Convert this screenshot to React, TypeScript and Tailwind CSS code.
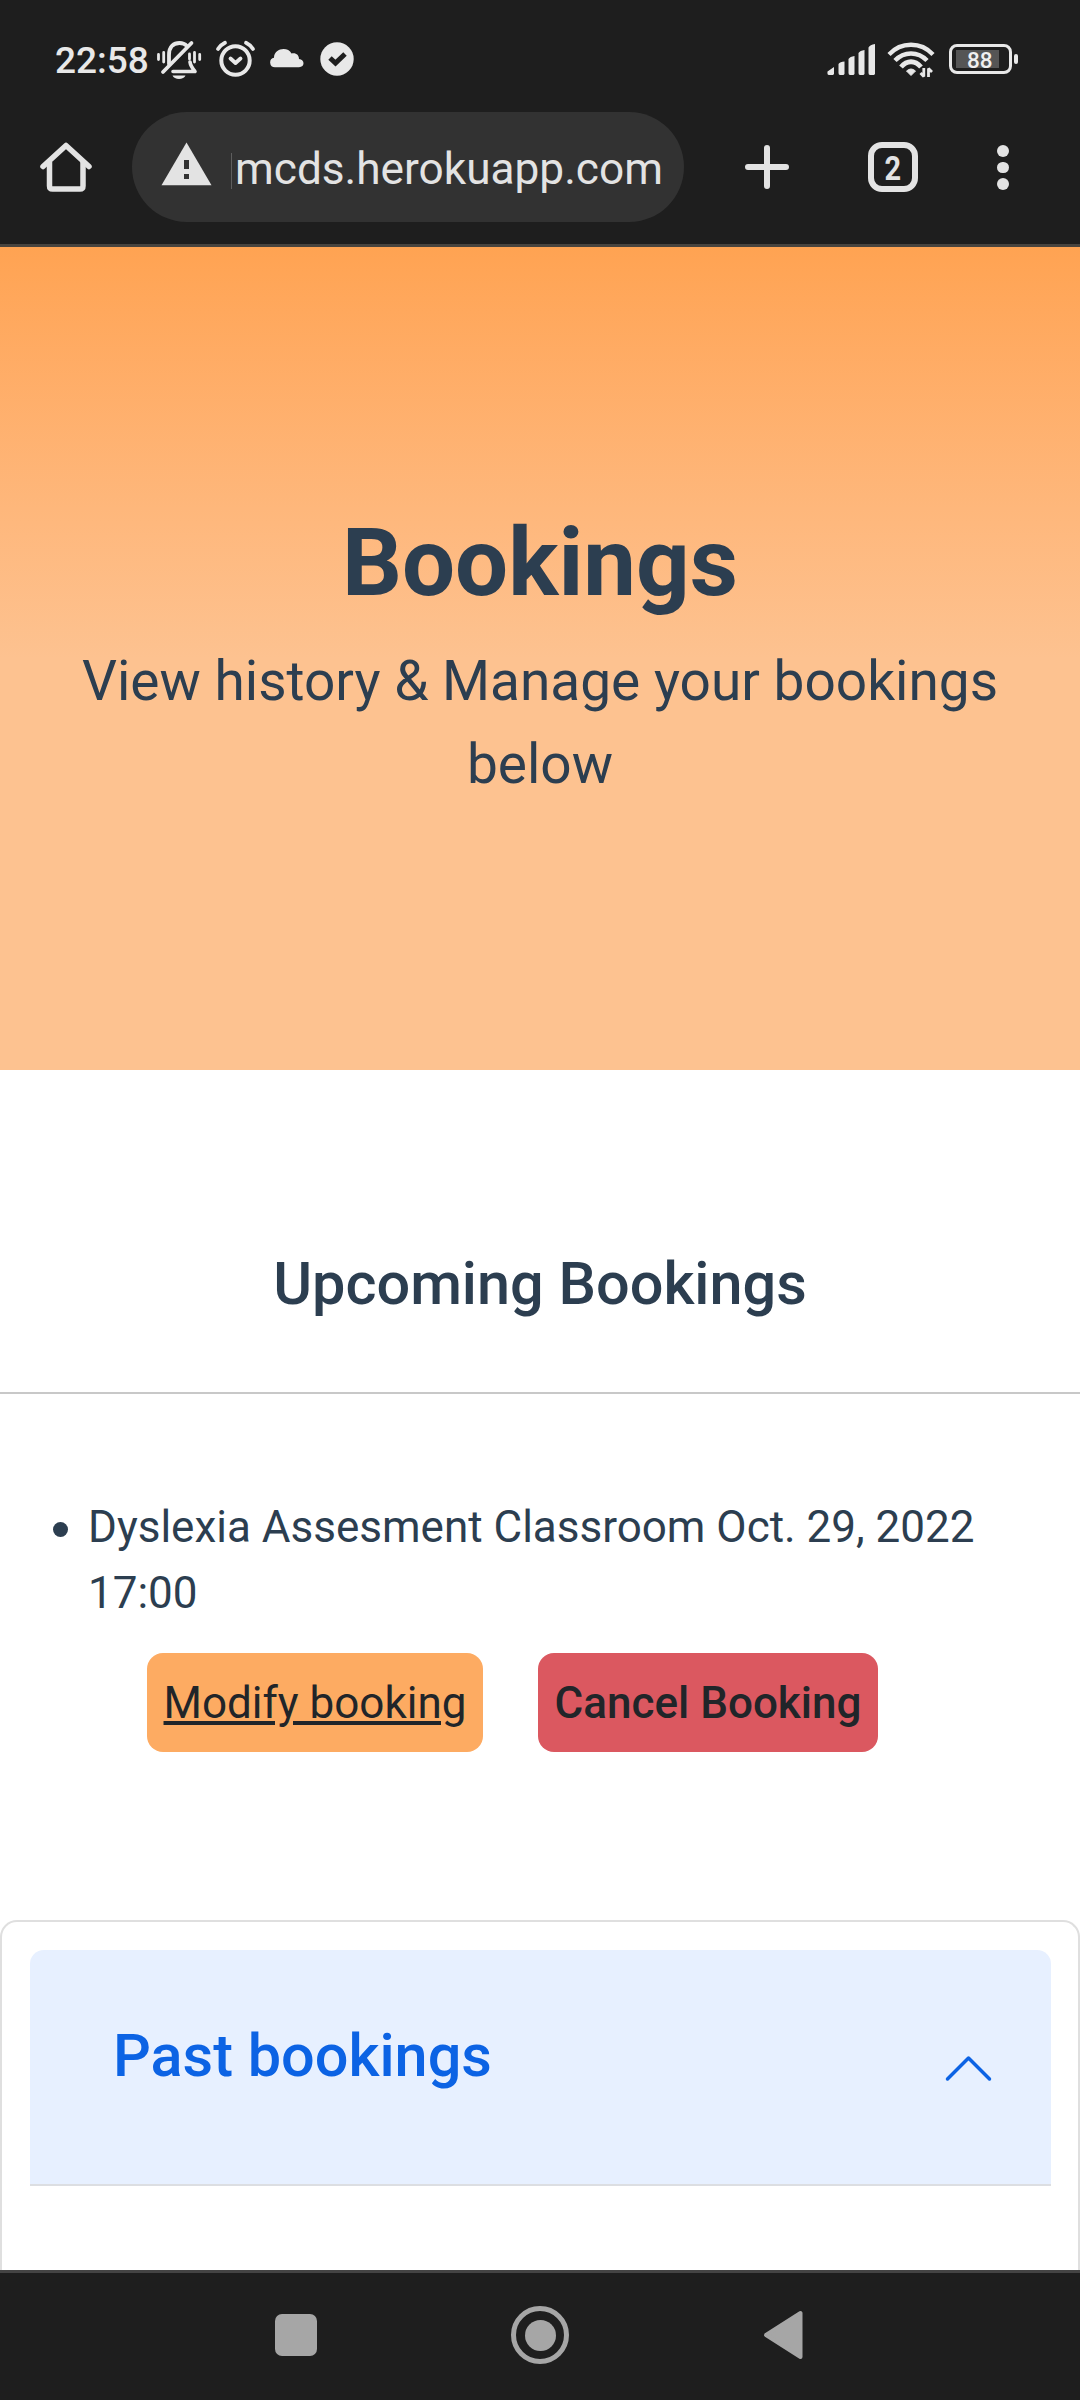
import React from 'react';

function StatusBar() {
  return (
    <div className="flex h-[106px] items-start text-[#e8e8e8]">
      <span className="ml-[55px] mt-[40px] w-[97px] whitespace-nowrap text-[37px] font-medium leading-[42px]">22:58</span>
      <svg className="mt-[36px] ml-[3px]" width="50" height="46" viewBox="155 36 50 46" fill="none" stroke="currentColor" strokeLinecap="round">
        <path d="M158.500 54.500v5M163.700 52.500v9.500M194.500 52.500v9.500M199.700 54.500v5M189.500 54v5" strokeWidth="2.8" />
        <path d="M169 64V55C169 46 174 43 179.500 43 183 43 185.500 44.500 187 46" strokeWidth="3.8" />
        <path d="M190 62C190.500 66 193 69 195 71.500H173" strokeWidth="3.600" strokeLinejoin="round" />
        <path d="M163 72L191.500 43" strokeWidth="3.8" />
        <path d="M172.500 75.500H185.500C184 80 174 80 172.500 75.500Z" fill="currentColor" stroke="none" />
      </svg>
      <svg className="mt-[36px] ml-[7px]" width="46" height="46" viewBox="212 36 46 46" fill="none" stroke="currentColor" strokeLinecap="round" strokeLinejoin="round">
        <circle cx="235.500" cy="60.500" r="14.200" strokeWidth="4" />
        <path d="M218 49Q220.500 45 225 42.800M253 49Q250.500 45 246 42.800" strokeWidth="3.800" />
        <path d="M230.500 58.500L235.500 63L240.500 58.500" strokeWidth="3.800" />
      </svg>
      <svg className="mt-[47px] ml-[11px]" width="36" height="22" viewBox="269 47 36 22" fill="currentColor">
        <path d="M275 67.300A4.800 4.800 0 0 1 274 57.800C274 48 288 46 291.500 53.500C296 52.500 299 55 299 59C305 59.500 305 67.300 299 67.300Z" />
      </svg>
      <svg className="mt-[41px] ml-[14px]" width="36" height="36" viewBox="319 41 36 36">
        <circle cx="337" cy="59" r="16.700" fill="currentColor" />
        <path d="M330 58L335.500 63L345 54" fill="none" stroke="#1e1e1e" strokeWidth="5" />
      </svg>
      <svg className="mt-[40px] ml-[471px]" width="52" height="38" viewBox="826 40 52 38" fill="currentColor">
        <path d="M827.500 71.500L834 67V74L833 75H829Q827 75 827.500 71.500ZM838.500 64Q840 61.500 844.500 61.500V74L843.500 75H840Q838.500 75 838.500 73ZM848.500 59Q850 56.500 854.500 56V74L853.500 75H850Q848.500 75 848.500 73ZM858.500 53Q860 50.500 864.500 50V74L863.500 75H860Q858.500 75 858.500 73ZM868.500 47.500Q870 44.500 875 44V74L874 75H870Q868.500 75 868.500 73Z" />
      </svg>
      <svg className="mt-[40px] ml-[8px]" width="52" height="40" viewBox="886 40 52 40" fill="none" stroke="currentColor">
        <path d="M889 54.500C901 41.500 921 41.500 933 54.500" strokeWidth="4.300" />
        <path d="M895 60.500C904 51 918 51 927 60.500" strokeWidth="4.500" />
        <path d="M901 67C907 60 915 60 921 67" strokeWidth="4.800" />
        <path d="M906.500 71Q911 67 915.500 71L911 75.500Z" fill="currentColor" strokeWidth="1" strokeLinejoin="round" />
        <path d="M923.800 68V76.500L920.500 73M928.500 77V68.500L932 72" strokeWidth="2.800" strokeLinejoin="bevel" />
      </svg>
      <div className="relative ml-[11px] mt-[44px] flex h-[30px] w-[63px] items-center rounded-[8px] border-[3px] border-[#e8e8e8] pl-[4px]">
        <div className="h-[18px] w-[43px] bg-[#555555]" />
        <span className="absolute left-[15px] top-[2px] text-[22.500px] font-medium leading-[22px] text-[#efefef]">88</span>
        <div className="absolute -right-[9px] top-[7px] h-[10px] w-[4px] rounded-[2px] bg-[#e8e8e8]" />
      </div>
    </div>
  );
}

function BrowserBar() {
  return (
    <div className="flex h-[138px] items-start text-[#e3e3e3]">
      <svg className="ml-[38px] mt-[34px]" width="56" height="54" viewBox="38 140 56 54" fill="none" stroke="currentColor" strokeWidth="5.500">
        <path d="M43 166.500L66 145.500L89 166.500" strokeLinecap="round" strokeLinejoin="round" />
        <path d="M49.500 162V186Q49.500 189 52.500 189H80Q83 189 83 186V162" />
      </svg>
      <div className="ml-[38px] mt-[6px] flex h-[110px] w-[552px] items-start rounded-full bg-[#323232]">
        <svg className="ml-[29px] mt-[30px]" width="51" height="44" viewBox="0 0 51 44">
          <path d="M25.500 0.500L50.500 43.300H0.500Z" fill="currentColor" />
          <path d="M23 18h5v9h-5zM23 32h5v5h-5z" fill="#323232" />
        </svg>
        <div className="ml-[19px] mt-[41px] h-[36px] w-px bg-[#5e5e5e]" />
        <span className="ml-[3px] mt-[29px] whitespace-nowrap text-[44.200px] leading-[56px]">mcds.herokuapp.com</span>
      </div>
      <svg className="ml-[60px] mt-[38px]" width="46" height="46" viewBox="0 0 46 46" fill="none" stroke="currentColor" strokeWidth="6" strokeLinecap="round">
        <path d="M23 4V42M4 23H42" />
      </svg>
      <div className="ml-[78px] mt-[36px] flex h-[50px] w-[50px] items-center justify-center rounded-[14px] border-[6px] border-[#e3e3e3] pt-[2px] text-[34px] font-bold leading-[36px]">
        <span className="scale-x-[0.85]">2</span>
      </div>
      <div className="ml-[79px] mt-[39px] flex flex-col gap-[5px]">
        <i className="size-[11.500px] rounded-full bg-[#e3e3e3]" />
        <i className="size-[11.500px] rounded-full bg-[#e3e3e3]" />
        <i className="size-[11.500px] rounded-full bg-[#e3e3e3]" />
      </div>
    </div>
  );
}

function Hero() {
  return (
    <section className="flex h-[823px] flex-col items-center bg-linear-to-b from-[#ffa352] via-[#fdc290] via-50% to-[#fdc290] pt-[259px] text-center">
      <h1 className="text-[94px] font-bold leading-[114px]">Bookings</h1>
      <p className="mt-[20px] w-[950px] text-[55px] leading-[82.500px]">View history &amp; Manage your bookings below</p>
    </section>
  );
}

function Upcoming() {
  return (
    <section className="h-[850px]">
      <h2 className="pt-[179px] text-center text-[59.400px] font-medium leading-[70px]">Upcoming Bookings</h2>
      <hr className="mt-[73px] border-0 border-t-2 border-[#c8c8c8]" />
      <div className="flex pt-[100px] pl-[53px]">
        <i className="mt-[28px] mr-[20px] size-[15px] shrink-0 rounded-full bg-[#2c3e50]" />
        <p className="w-[920px] text-[44px] leading-[66px]">Dyslexia Assesment Classroom Oct. 29, 2022 17:00</p>
      </div>
      <div className="mt-[27px] ml-[147px] flex gap-[55px] text-[44px] leading-[66px] text-[#212529]">
        <a className="flex h-[99px] w-[336px] items-center justify-center rounded-[16px] bg-[#fdab62] underline">Modify booking</a>
        <button className="flex h-[99px] w-[340px] items-center justify-center rounded-[16px] bg-[#db5860] font-medium">Cancel Booking</button>
      </div>
    </section>
  );
}

function PastBookings() {
  return (
    <section className="h-[350px] rounded-t-[17px] border-2 border-b-0 border-[#dfdfdf] pt-[28px] pr-[27px] pl-[28px]">
      <div className="flex h-[236px] justify-between rounded-t-[14px] border-b-2 border-[#dcdee2] bg-[#e7f0ff] pt-[71px] pl-[83px] pr-[58px] text-[#0c63e4]">
        <h2 className="text-[59.400px] font-medium leading-[71px]">Past bookings</h2>
        <svg className="mt-[33px]" width="50" height="30" viewBox="0 0 50 30" fill="none" stroke="currentColor" strokeWidth="3.500" strokeLinecap="round" strokeLinejoin="round">
          <path d="M4.500 25L25.500 4L46.500 25" />
        </svg>
      </div>
    </section>
  );
}

export default function App() {
  return (
    <div className="flex h-[2400px] w-[1080px] flex-col overflow-hidden bg-white font-['Roboto',sans-serif] text-[#2c3e50]">
      <header className="h-[247px] shrink-0 border-b-[3px] border-[#48443f] bg-[#1e1e1e]">
        <StatusBar />
        <BrowserBar />
      </header>
      <main className="h-[2023px] shrink-0 overflow-hidden">
        <Hero />
        <Upcoming />
        <PastBookings />
      </main>
      <nav className="flex h-[130px] shrink-0 items-start border-t-[3px] border-[#444444] bg-[#1e1e1e]">
        <div className="ml-[275px] mt-[41px] size-[42px] rounded-[7px] bg-[#a6a6a6]" />
        <div className="ml-[194px] mt-[33px] flex size-[58px] items-center justify-center rounded-full border-[5px] border-[#a6a6a6]">
          <div className="size-[31px] rounded-full bg-[#a6a6a6]" />
        </div>
        <svg className="ml-[193px] mt-[37px]" width="42" height="50" viewBox="0 0 42 50" fill="#a6a6a6" stroke="#a6a6a6" strokeWidth="4" strokeLinejoin="round">
          <path d="M4 25L38.500 3V47Z" />
        </svg>
      </nav>
    </div>
  );
}
